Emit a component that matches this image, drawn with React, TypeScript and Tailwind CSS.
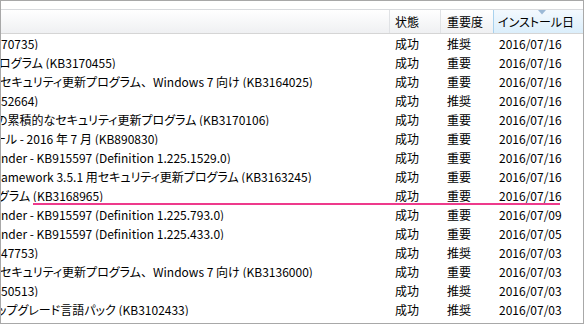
import React from "react";

type Row = { name: React.ReactNode; off: string; imp: string; date: string };

const Comma = () => <span className="[font-feature-settings:normal]">、</span>;

const rows: Row[] = [
  { name: "70735)", off: "ml-0", imp: "推奨", date: "2016/07/16" },
  { name: "ログラム (KB3170455)", off: "ml-[-2px]", imp: "重要", date: "2016/07/16" },
  { name: <>セキュリティ更新プログラム<Comma />Windows 7 向け (KB3164025)</>, off: "ml-[-1px]", imp: "重要", date: "2016/07/16" },
  { name: "52664)", off: "ml-0", imp: "推奨", date: "2016/07/16" },
  { name: "の累積的なセキュリティ更新プログラム (KB3170106)", off: "ml-[-5px]", imp: "重要", date: "2016/07/16" },
  { name: "ール - 2016 年 7 月 (KB890830)", off: "ml-[-7px]", imp: "重要", date: "2016/07/16" },
  { name: "nder - KB915597 (Definition 1.225.1529.0)", off: "ml-0", imp: "重要", date: "2016/07/16" },
  { name: "amework 3.5.1 用セキュリティ更新プログラム (KB3163245)", off: "ml-0", imp: "重要", date: "2016/07/16" },
  { name: "グラム (KB3168965)", off: "ml-[-3px]", imp: "重要", date: "2016/07/16" },
  { name: "nder - KB915597 (Definition 1.225.793.0)", off: "ml-0", imp: "重要", date: "2016/07/09" },
  { name: "nder - KB915597 (Definition 1.225.433.0)", off: "ml-0", imp: "重要", date: "2016/07/05" },
  { name: "47753)", off: "ml-0", imp: "推奨", date: "2016/07/03" },
  { name: <>セキュリティ更新プログラム<Comma />Windows 7 向け (KB3136000)</>, off: "ml-[-1px]", imp: "重要", date: "2016/07/03" },
  { name: "50513)", off: "ml-0", imp: "推奨", date: "2016/07/03" },
  { name: "ップグレード言語パック (KB3102433)", off: "ml-[-4px]", imp: "推奨", date: "2016/07/03" },
  { name: "プログラム更新 (KB3138612)", off: "ml-[-4px]", imp: "重要", date: "2016/07/03" },
];

export default function App() {
  return (
    <div className="relative w-[585px] h-[325px] overflow-hidden bg-white text-[12px] leading-none text-black font-['Noto_Sans_CJK_JP',sans-serif] [font-feature-settings:'palt']">
      <div className="w-[584px] h-[324px] border border-[#a8a8a8] overflow-hidden flex flex-col">
        <div className="h-[9px] shrink-0 border-b border-[#d8dadd] bg-white" />
        <div className="h-[24px] shrink-0 flex border-b border-[#d5d5d5] bg-gradient-to-b from-white to-[#eff0f2]">
          <div className="w-[389px] shrink-0 border-r border-[#e0e2e5]" />
          <div className="w-[51px] shrink-0 border-r border-[#e0e2e5] pl-[5px] flex items-center pt-[1px]">状態</div>
          <div className="w-[52px] shrink-0 pl-[6px] flex items-center pt-[1px]">重要度</div>
          <div className="relative flex-1 border-l border-[#a9d2ee] bg-gradient-to-b from-[#f3f9fe] to-[#dbeefb] pl-[4px] flex items-center pt-[1px] whitespace-nowrap">
            インストール日
            <svg className="absolute left-[44px] top-0" width="8" height="5" viewBox="0 0 8 5">
              <path d="M0 0 L8 0 L4 4.5 Z" fill="#9cb9d6" />
            </svg>
          </div>
        </div>
        <div className="flex flex-col">
          {rows.map((r, i) => (
            <div key={i} className="h-[19px] shrink-0 flex items-center whitespace-nowrap">
              <div className="w-[389px] shrink-0 overflow-hidden">
                <span className={`block ${r.off}`}>{r.name}</span>
              </div>
              <div className="w-[51px] shrink-0 pl-[5px]">成功</div>
              <div className="w-[52px] shrink-0 pl-[6px]">{r.imp}</div>
              <div className="flex-1 pl-[6px]">{r.date}</div>
            </div>
          ))}
        </div>
      </div>
      <div className="absolute left-[33px] top-[203px] w-[527px] h-[2px] bg-[#ee3a8c]" />
    </div>
  );
}
